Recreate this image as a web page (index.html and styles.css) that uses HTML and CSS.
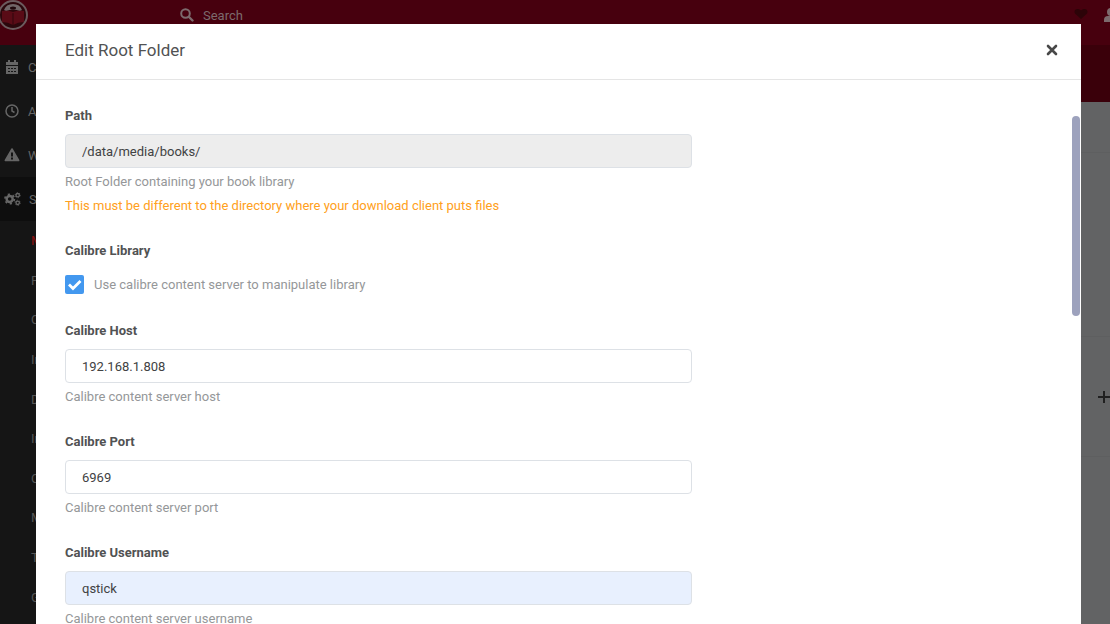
FILE: index.html
```html
<!DOCTYPE html>
<html lang="en">
<head>
<meta charset="utf-8">
<title>Edit Root Folder</title>
<link rel="stylesheet" href="styles.css">
</head>
<body>
<div class="app">
  <header class="topbar">
    <a class="logo" href="#" aria-label="Home">
      <svg width="30" height="32" viewBox="0 0 30 32"><circle cx="13" cy="15" r="14" fill="#2b070c" stroke="#6c5b5e" stroke-width="2"/><path d="M4 10Q6 4 13 4Q20 4 22 10L20 11Q13 8 6 11Z" fill="#716668"/><ellipse cx="13" cy="8" rx="3" ry="1.500" fill="#20080c"/><path d="M2 11Q8 10 13 12Q18 10 24 11V22Q18 22 13 25Q8 22 2 22Z" fill="#590b16"/><path d="M13 13V25" stroke="#30060c" stroke-width="1"/></svg>
    </a>
    <label class="search">
      <svg width="14" height="14" viewBox="0 0 14 14" fill="none" stroke="#7c6a6d" stroke-linecap="round"><circle cx="5.5" cy="5.5" r="4.3" stroke-width="2"/><path d="M9 9l3.500 3.500" stroke-width="2.400"/></svg>
      <input class="search-input" type="text" placeholder="Search" aria-label="Search">
    </label>
    <svg class="heart" width="14" height="12" viewBox="0 0 14 12"><path d="M7 11L1 5.500C-1 2 3-1 7 2.500C11-1 15 2 13 5.500Z" fill="#2c0308"/></svg>
    <svg class="user" width="16" height="16" viewBox="0 0 16 16" fill="#7c6a6d"><circle cx="8" cy="5" r="4"/><path d="M1 15v-2q0-4 4-4h6q4 0 4 4v2z"/></svg>
  </header>
  <div class="workspace">
    <nav class="sidebar">
      <a class="nav-item" href="#"><svg width="16" height="16" viewBox="0 0 16 16"><path fill="#666" d="M2 3h2V1h2v2h4V1h2v2h2v3H2zM2 7h12v8H2z"/><path stroke="#151515" stroke-width="1.200" d="M4 9.500h2m1 0h2m1 0h2M4 12.500h2m1 0h2m1 0h2"/></svg>Calendar</a>
      <a class="nav-item" href="#"><svg width="16" height="16" viewBox="0 0 16 16" fill="none" stroke="#666" stroke-width="1.500"><circle cx="8" cy="8" r="6"/><path d="M8 4v4l2.500 1.500"/></svg>Activity</a>
      <a class="nav-item" href="#"><svg width="16" height="16" viewBox="0 0 16 16"><path fill="#666" stroke="#666" stroke-width="1.500" stroke-linejoin="round" d="M8 2l6.700 11.500H1.300z"/><path stroke="#151515" stroke-width="2" d="M8 5.500v4M8 10.500v2"/></svg>Wanted</a>
      <a class="nav-item nav-item-open" href="#"><svg width="17" height="16" viewBox="0 0 18 16" fill="none" stroke="#666"><circle cx="6" cy="8" r="3.200" stroke-width="2.600"/><circle cx="6" cy="8" r="5" stroke-width="1.800" stroke-dasharray="2.300 2.936"/><circle cx="14.500" cy="4" r="1.800" stroke-width="1.400"/><circle cx="14.500" cy="4" r="2.700" stroke-width="1" stroke-dasharray="1.200 1.627"/><circle cx="14.500" cy="12" r="1.800" stroke-width="1.400"/><circle cx="14.500" cy="12" r="2.700" stroke-width="1" stroke-dasharray="1.200 1.627"/></svg>Settings</a>
      <div class="subnav">
        <a class="active" href="#">Media Management</a>
        <a href="#">Profiles</a>
        <a href="#">Quality</a>
        <a href="#">Indexers</a>
        <a href="#">Download Clients</a>
        <a href="#">Import Lists</a>
        <a href="#">Connect</a>
        <a href="#">Metadata</a>
        <a href="#">Tags</a>
        <a href="#">General</a>
      </div>
    </nav>
    <main class="content">
      <div class="toolbar"></div>
      <div class="panel panel-first"></div>
      <div class="panel panel-middle"></div>
      <div class="panel panel-add">
        <button class="add" type="button" aria-label="Add root folder"><svg width="12" height="12" viewBox="0 0 12 12"><path d="M6 0v12M0 6h12" stroke="#202020" stroke-width="2"/></svg></button>
      </div>
    </main>
  </div>
</div>

<div class="overlay">
  <section class="modal" role="dialog" aria-labelledby="modal-title">
    <header class="modal-header">
      <h1 class="modal-title" id="modal-title">Edit Root Folder</h1>
      <button class="close" type="button" aria-label="Close"><svg width="12" height="12" viewBox="0 0 12 12"><path d="M2 2l8 8M10 2l-8 8" stroke="#484848" stroke-width="2.600" stroke-linecap="round"/></svg></button>
    </header>
    <form class="modal-body">
      <div class="field">
        <label class="label" for="path">Path</label>
        <input class="input input-disabled" id="path" type="text" value="/data/media/books/" readonly>
        <p class="help">Root Folder containing your book library</p>
        <p class="help warning">This must be different to the directory where your download client puts files</p>
      </div>
      <div class="field">
        <span class="label">Calibre Library</span>
        <label class="check"><input class="checkbox" type="checkbox" checked>Use calibre content server to manipulate library</label>
      </div>
      <div class="field">
        <label class="label" for="host">Calibre Host</label>
        <input class="input" id="host" type="text" value="192.168.1.808">
        <p class="help">Calibre content server host</p>
      </div>
      <div class="field">
        <label class="label" for="port">Calibre Port</label>
        <input class="input" id="port" type="text" value="6969">
        <p class="help">Calibre content server port</p>
      </div>
      <div class="field">
        <label class="label" for="username">Calibre Username</label>
        <input class="input input-filled" id="username" type="text" value="qstick">
        <p class="help">Calibre content server username</p>
      </div>
    </form>
    <div class="scroll-thumb"></div>
  </section>
</div>
</body>
</html>
```
FILE: styles.css
```css
* { box-sizing: border-box; }

body {
  margin: 0;
  overflow: hidden;
  font-family: Roboto, "Liberation Sans", sans-serif;
  font-size: 13px;
  color: #515253;
}

button, input { font: inherit; }
a { text-decoration: none; }

.app {
  display: flex;
  flex-direction: column;
  height: 100vh;
  background: #626364;
}

.topbar {
  display: flex;
  align-items: flex-start;
  height: 45px;
  background: #47000e;
}

.logo { width: 180px; height: 32px; }
.search {
  display: flex;
  flex: 1;
  align-items: center;
  gap: 9px;
  height: 30px;
}
.search-input {
  width: 200px;
  padding: 0;
  border: 0;
  background: none;
  color: #7c6a6d;
  outline: none;
}
.search-input::placeholder { color: #7c6a6d; opacity: 1; }
.heart { margin: 8px 15px 0 0; }
.user { flex: none; margin: 7px -9px 0 0; }

.workspace { display: flex; flex: 1; min-height: 0; }

.sidebar {
  display: flex;
  flex-direction: column;
  width: 36px;
  overflow: hidden;
  background: #151515;
  white-space: nowrap;
}
.nav-item {
  display: flex;
  align-items: center;
  gap: 8px;
  height: 44px;
  padding-left: 4px;
  color: #666;
}
.nav-item svg { flex: none; }
.nav-item-open { background: #0e0e0e; }
.subnav {
  display: flex;
  flex: 1;
  flex-direction: column;
  padding: 0 0 7px 31px;
}
.subnav a {
  display: flex;
  flex: 1;
  align-items: center;
  color: #555;
}
.subnav .active { color: #8a1010; }

.content { display: flex; flex: 1; flex-direction: column; }
.toolbar { height: 57px; background: #3a000a; }
.panel { border-bottom: 1px solid #5e5f60; }
.panel-first { height: 51px; }
.panel-middle { height: 184px; }
.panel-add {
  display: flex;
  align-items: center;
  justify-content: flex-end;
  height: 120px;
}
.add {
  display: flex;
  padding: 0;
  border: 0;
  background: none;
}

.overlay {
  position: fixed;
  inset: 0;
  display: flex;
  padding: 24px 29px 0 36px;
}
.modal {
  position: relative;
  flex: 1;
  overflow: hidden;
  background: #fff;
}
.modal-header {
  display: flex;
  align-items: center;
  justify-content: space-between;
  height: 56px;
  padding: 0 23px 3px 29px;
  border-bottom: 1px solid #e5e5e5;
}
.modal-title {
  margin: 0;
  font-size: 17px;
  font-weight: 400;
  line-height: 24px;
}
.close {
  display: flex;
  padding: 0;
  border: 0;
  background: none;
}
.modal-body {
  display: flex;
  flex-direction: column;
  gap: 25px;
  width: 63%;
  padding: 26px 2px 0 29px;
}
.field { display: flex; flex-direction: column; }
.label {
  margin-bottom: 8px;
  font-weight: 700;
  line-height: 20px;
}
.input {
  width: 100%;
  height: 34px;
  padding: 0 16px;
  border: 1px solid #dde1e6;
  border-radius: 4px;
  background: #fff;
  color: #414243;
  outline: none;
}
.input-disabled { background: #ededed; }
.input-filled { background: #e8f0fe; }
.help {
  margin: 4px 0 0;
  color: #959799;
  line-height: 20px;
}
.warning { color: #ffa020; }
.check {
  display: flex;
  align-items: center;
  gap: 10px;
  height: 27px;
  padding-top: 4px;
  color: #959799;
}
.checkbox {
  width: 19px;
  height: 19px;
  margin: 0;
  border-radius: 2px;
  appearance: none;
  background: #4398ef url("data:image/svg+xml,%3Csvg xmlns='http://www.w3.org/2000/svg' viewBox='0 0 19 19'%3E%3Cpath d='M4 9.500l4 4 7.500-7.500' fill='none' stroke='white' stroke-width='2.800'/%3E%3C/svg%3E") center / contain no-repeat;
}
.scroll-thumb {
  position: absolute;
  top: 92px;
  right: 1px;
  width: 8px;
  height: 200px;
  border-radius: 4px;
  background: #9da2bd;
}
```
